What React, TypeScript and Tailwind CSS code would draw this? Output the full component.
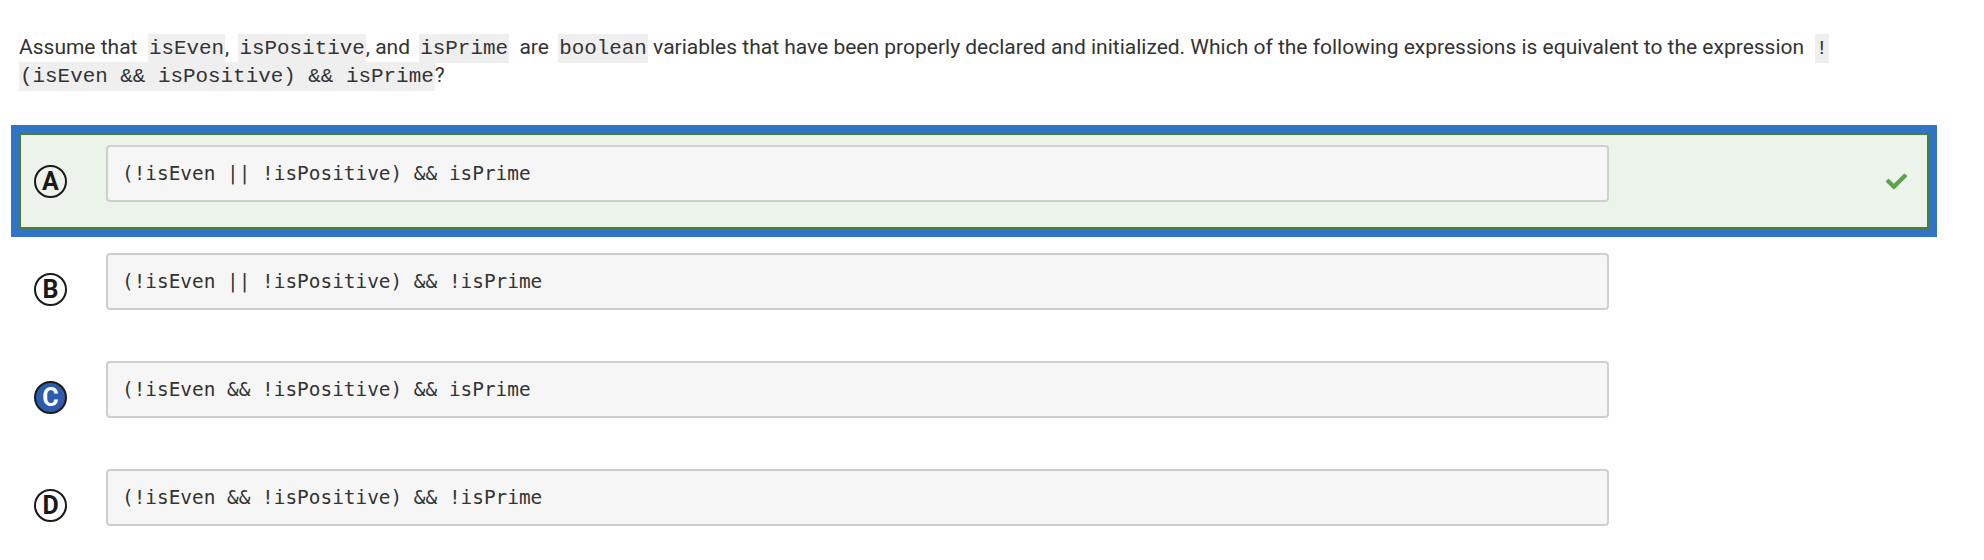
import React from "react";
import { FaCheck } from "react-icons/fa";

type Choice = {
  letter: string;
  code: string;
  correct?: boolean;
  picked?: boolean;
};

const choices: Choice[] = [
  { letter: "A", code: "(!isEven || !isPositive) && isPrime", correct: true },
  { letter: "B", code: "(!isEven || !isPositive) && !isPrime" },
  { letter: "C", code: "(!isEven && !isPositive) && isPrime", picked: true },
  { letter: "D", code: "(!isEven && !isPositive) && !isPrime" },
];

const Code = ({ children, className = "" }: { children: React.ReactNode; className?: string }) => (
  <code
    className={`bg-[#efefef] px-[1px] py-[3px] font-['Liberation_Mono',monospace] text-[20.9px] leading-[20px] ${className}`}
  >
    {children}
  </code>
);

const Letter = ({ letter, picked }: { letter: string; picked?: boolean }) => (
  <div
    className={`flex h-[33px] w-[33px] items-center justify-center rounded-full border-2 border-[#1a1a1a] text-[25px] font-bold leading-none ${
      picked ? "bg-[#2c5cab] text-white" : "bg-transparent text-[#1a1a1a]"
    }`}
  >
    {letter}
  </div>
);

const Row = ({ choice }: { choice: Choice }) => (
  <div
    className={`flex h-[96px] border-2 ${
      choice.correct
        ? "border-[#4a7e37] bg-[#ebf3ea] outline-8 outline-solid outline-[#3174c6]"
        : "border-transparent"
    }`}
  >
    <div className="flex w-[85px] shrink-0 items-center pl-[13px]">
      <Letter letter={choice.letter} picked={choice.picked} />
    </div>
    <div className="mt-[10px] flex h-[57px] w-[1503px] shrink-0 items-center rounded-[4px] border-2 border-[#cfcfcf] bg-[#f6f6f6] pl-[14px] font-['DejaVu_Sans_Mono',monospace] text-[19.4px] text-[#333]">
      {choice.code}
    </div>
    {choice.correct ? (
      <div className="ml-auto mr-[20px] flex items-center text-[#5aa24b]">
        <FaCheck size={21} />
      </div>
    ) : null}
  </div>
);

export default function App() {
  return (
    <div className="h-[560px] w-[1984px] overflow-hidden bg-white font-['Roboto',sans-serif] text-[#333]">
      <div className="w-[1929px] pl-[19px] pt-[33px]">
        <p className="h-[56px] text-[21px] leading-[28px]">
          Assume that&nbsp; <Code>isEven</Code>, <Code className="ml-[4px]">isPositive</Code>, and{" "}
          <Code className="ml-[4px]">isPrime</Code>&nbsp; are <Code className="ml-[4px]">boolean</Code>{" "}
          variables that have been properly declared and initialized. Which of the following expressions is
          equivalent to the expression&nbsp; <Code>!</Code>
          <br />
          <Code>(isEven &amp;&amp; isPositive) &amp;&amp; isPrime</Code>?
        </p>

        <div className="mt-[44px] flex flex-col gap-[12px]">
          {choices.map((c) => (
            <Row key={c.letter} choice={c} />
          ))}
        </div>
      </div>
    </div>
  );
}
